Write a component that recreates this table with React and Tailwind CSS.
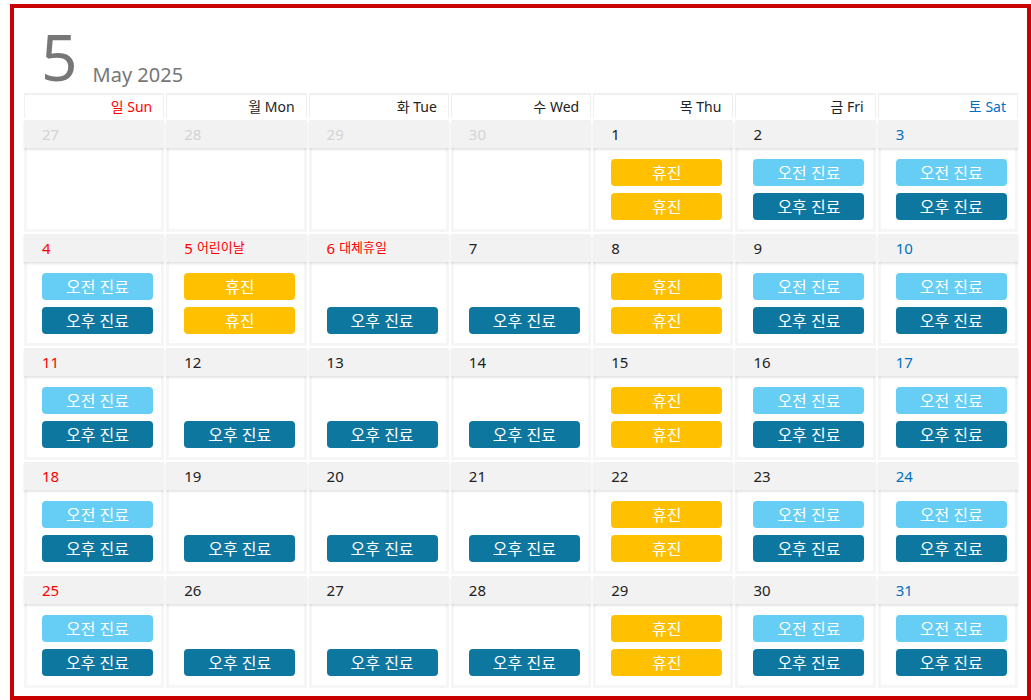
import React from 'react';

const DAYS = [
  { ko: '일', en: 'Sun', color: 'text-[#ff0000]' },
  { ko: '월', en: 'Mon', color: 'text-[#222]' },
  { ko: '화', en: 'Tue', color: 'text-[#222]' },
  { ko: '수', en: 'Wed', color: 'text-[#222]' },
  { ko: '목', en: 'Thu', color: 'text-[#222]' },
  { ko: '금', en: 'Fri', color: 'text-[#222]' },
  { ko: '토', en: 'Sat', color: 'text-[#0070c0]' },
];

const HOLIDAYS = { 5: '어린이날', 6: '대체휴일' };

// schedule by weekday: am / pm slot
const slotsFor = (dow, date) => {
  if (HOLIDAYS[date] === '어린이날') return ['off', 'off'];
  switch (dow) {
    case 0:
    case 5:
    case 6:
      return ['am', 'pm'];
    case 4:
      return ['off', 'off'];
    default:
      return [null, 'pm'];
  }
};

const buildWeeks = () => {
  const cells = [27, 28, 29, 30].map((d) => ({ date: d, other: true }));
  for (let d = 1; d <= 31; d++) cells.push({ date: d, other: false });
  const weeks = [];
  for (let i = 0; i < cells.length; i += 7) weeks.push(cells.slice(i, i + 7));
  return weeks;
};

const Tag = ({ kind }) => {
  if (!kind) return <div className="h-[27px]" />;
  const styles = {
    am: 'bg-[#66cdf5]',
    pm: 'bg-[#0e77a0]',
    off: 'bg-[#ffc000]',
  };
  const label = { am: '오전 진료', pm: '오후 진료', off: '휴진' };
  return (
    <div
      className={`${styles[kind]} h-[27px] w-[111px] rounded-[4px] flex items-center justify-center text-white text-[16px]`}
    >
      {label[kind]}
    </div>
  );
};

const dateColor = (dow, cell) => {
  if (cell.other) return 'text-[#d4d4d4]';
  if (HOLIDAYS[cell.date] || dow === 0) return 'text-[#ff0000]';
  if (dow === 6) return 'text-[#0070c0]';
  return 'text-[#222]';
};

export default function App() {
  const weeks = buildWeeks();

  return (
    <div className="w-[1031px] h-[700px] bg-white overflow-hidden font-['Noto_Sans','Noto_Sans_CJK_KR',sans-serif]">
      <div className="ml-[10px] mt-[4px] w-[1021px] h-[696px] border-4 border-[#c80000] px-[10px]">
        <div className="flex items-end h-[84px] pl-[17px] pb-[3px]">
          <span className="text-[64px] leading-none text-[#777]">5</span>
          <span className="ml-[15px] mb-[4px] text-[20px] leading-none text-[#777]">May 2025</span>
        </div>

        <div className="w-[994px] grid grid-cols-7 gap-x-[2px]">
          {DAYS.map((d) => (
            <div
              key={d.en}
              className={`h-[25px] mt-[1px] bg-white border-t-2 border-x border-[#f0f0f0] flex items-center justify-end pr-[11px] text-[14px] ${d.color}`}
            >
              {d.ko} {d.en}
            </div>
          ))}
        </div>

        <div className="w-[994px] mt-[2px] flex flex-col gap-y-[2px]">
          {weeks.map((week, wi) => (
            <div key={wi} className="grid grid-cols-7 gap-x-[2px]">
              {week.map((cell, dow) => (
                <div key={dow} className="flex flex-col">
                  <div
                    className={`h-[28px] bg-[#f2f2f2] shadow-[0_2px_2px_rgba(0,0,0,0.1)] relative z-10 flex items-center pl-[18px] text-[15px] ${dateColor(dow, cell)}`}
                  >
                    <span>{cell.date}</span>
                    {!cell.other && HOLIDAYS[cell.date] && (
                      <span className="ml-[4px] text-[13px]">{HOLIDAYS[cell.date]}</span>
                    )}
                  </div>
                  <div className="h-[84px] bg-white border-x-[3px] border-b-[3px] border-[#f6f6f6] pl-[15px] pt-[11px] flex flex-col gap-y-[7px]">
                    {!cell.other &&
                      slotsFor(dow, cell.date).map((k, i) => <Tag key={i} kind={k} />)}
                  </div>
                </div>
              ))}
            </div>
          ))}
        </div>
      </div>
    </div>
  );
}
